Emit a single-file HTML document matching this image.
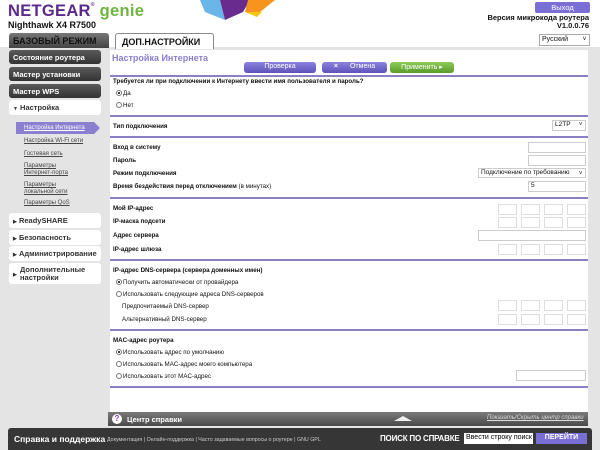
<!DOCTYPE html>
<html><head><meta charset="utf-8"><style>
*{margin:0;padding:0;box-sizing:border-box}
body{width:600px;height:450px;position:relative;overflow:hidden;background:#fff;font-family:"Liberation Sans",sans-serif;color:#111}
.a{position:absolute;white-space:nowrap}
.sb{position:absolute;left:9px;width:92px;height:14px;border-radius:3px;background:linear-gradient(#5a5a5a,#333);color:#fff;font-size:7.5px;font-weight:bold;padding:3px 0 0 4px}
.sw{position:absolute;left:9px;width:92px;height:15px;border-radius:3px;background:#fff;color:#333;font-size:7.5px;font-weight:bold;padding:3px 0 0 4px}
.sub{position:absolute;left:24px;font-size:6px;color:#444;text-decoration:underline;line-height:7px}
.t{position:absolute;left:113px;font-size:6.2px;font-weight:bold;white-space:nowrap}
.tn{position:absolute;font-size:6.2px;white-space:nowrap}
.ln{position:absolute;left:110px;width:478px;height:2px;background:#8b80c6}
.in{position:absolute;height:11px;border:1px solid #ccc;background:#fff;font-size:6.5px;padding-left:2px}
.ib{position:absolute;width:19px;height:11px;border:1px solid #ddd;background:#fff}
.r{display:inline-block;width:6px;height:6px;border:1px solid #777;border-radius:50%;vertical-align:-1px;margin-right:1px;position:relative}
.r.on:after{content:"";position:absolute;left:1px;top:1px;width:2px;height:2px;border-radius:50%;background:#000}
.btn{position:absolute;top:62px;height:11px;border-radius:3px;color:#fff;font-size:7px;text-align:center;padding-top:1px}
</style></head><body>
<!-- header -->
<div class="a" style="left:8px;top:2px;font-size:16.5px;font-weight:bold;color:#5b2a8a;letter-spacing:0.3px">NETGEAR<span style="font-size:5px;vertical-align:top">®</span> <span style="color:#6fb43f">genie</span></div>
<svg class="a" style="left:200px;top:0" width="80" height="22"><polygon points="0,0 20,0 25,20 5,12" fill="#69b7e8"/><polygon points="20,0 50,0 43,12 25,20" fill="#6a2b8f"/><polygon points="48,0 75,0 60,12 45,12" fill="#f7941d"/><polygon points="45,12 62,12 57,17" fill="#f9c513"/></svg>
<div class="a" style="left:8px;top:20px;font-size:9px;font-weight:bold">Nighthawk X4 R7500</div>
<div class="a" style="left:535px;top:2px;width:55px;height:11px;background:#7b6fd6;color:#fff;font-size:7.5px;text-align:center;border-radius:2px;padding-top:1px">Выход</div>
<div class="a" style="right:11px;top:14px;font-size:7.5px;font-weight:bold;text-align:right;line-height:8px">Версия микрокода роутера<br>V1.0.0.76</div>
<!-- tab strip -->
<div class="a" style="left:0;top:47px;width:600px;height:403px;background:#e4e4e4"></div>
<div class="a" style="left:9px;top:33px;width:100px;height:15px;background:linear-gradient(#777,#444);border-radius:3px 3px 0 0;color:#111;font-size:9px;font-weight:bold;padding:3px 0 0 4px">БАЗОВЫЙ РЕЖИМ</div>
<div class="a" style="left:115px;top:33px;width:99px;height:16px;background:#fff;border:1px solid #888;border-bottom:none;border-radius:3px 3px 0 0;font-size:9px;font-weight:bold;padding:3px 0 0 6px">ДОП.НАСТРОЙКИ</div>
<div class="a" style="left:539px;top:34px;width:51px;height:12px;background:#fff;border:1px solid #aaa;font-size:7px;padding:1px 0 0 2px">Русский<span style="position:absolute;right:3px;font-size:6px">v</span></div>
<!-- sidebar -->
<div class="sb" style="top:50px">Состояние роутера</div>
<div class="sb" style="top:67px">Мастер установки</div>
<div class="sb" style="top:84px">Мастер WPS</div>
<div class="sw" style="top:100px"><span style="font-size:5px">▼</span> Настройка</div>
<div class="a" style="left:16px;top:122px;width:84px;height:12px;background:#8b80d0;clip-path:polygon(0 0,93% 0,100% 50%,93% 100%,0 100%)"></div>
<div class="sub" style="top:125px;color:#fff">Настройка Интернета</div>
<div class="sub" style="top:138px">Настройка Wi-Fi сети</div>
<div class="sub" style="top:151px">Гостевая сеть</div>
<div class="sub" style="top:163px">Параметры<br>Интернет-порта</div>
<div class="sub" style="top:182px">Параметры<br>локальной сети</div>
<div class="sub" style="top:200px">Параметры QoS</div>
<div class="sw" style="top:213px"><span style="font-size:5px">▶</span> ReadySHARE</div>
<div class="sw" style="top:230px"><span style="font-size:5px">▶</span> Безопасность</div>
<div class="sw" style="top:246px"><span style="font-size:5px">▶</span> Администрирование</div>
<div class="sw" style="top:263px;height:21px;line-height:8px;padding-top:3px;padding-left:11px"><span style="font-size:5px;position:absolute;left:4px;top:8px">▶</span>Дополнительные<br>настройки</div>
<!-- content -->
<div class="a" style="left:110px;top:50px;width:478px;height:362px;background:#fff"></div>
<div class="a" style="left:112px;top:53px;font-size:9px;font-weight:bold;color:#8a7fcc">Настройка Интернета</div>
<div class="btn" style="left:244px;width:72px;background:linear-gradient(#8d83dd,#5d52b8)">Проверка</div>
<div class="btn" style="left:322px;width:65px;background:linear-gradient(#8d83dd,#5d52b8)"><b style="margin-right:12px">×</b>Отмена</div>
<div class="btn" style="left:390px;width:64px;background:linear-gradient(#8fcc5a,#5a9a2a)">Применить ▸</div>
<div class="ln" style="top:75px"></div>
<div class="t" style="top:78px">Требуется ли при подключении к Интернету ввести имя пользователя и пароль?</div>
<div class="tn" style="left:116px;top:90px"><span class="r on"></span>Да</div>
<div class="tn" style="left:116px;top:102px"><span class="r"></span>Нет</div>
<div class="ln" style="top:115px"></div>
<div class="t" style="top:123px">Тип подключения</div>
<div class="in" style="left:552px;top:120px;width:34px">L2TP<span style="position:absolute;right:3px;font-size:5.5px">v</span></div>
<div class="ln" style="top:136px"></div>
<div class="t" style="top:144px">Вход в систему</div>
<div class="in" style="left:528px;top:142px;width:58px"></div>
<div class="t" style="top:157px">Пароль</div>
<div class="in" style="left:528px;top:155px;width:58px"></div>
<div class="t" style="top:170px">Режим подключения</div>
<div class="in" style="left:478px;top:168px;width:108px;height:10px;font-size:6.5px;line-height:8px">Подключение по требованию<span style="position:absolute;right:3px;font-size:5.5px">v</span></div>
<div class="t" style="top:183px">Время бездействия перед отключением <span style="font-weight:normal">(в минутах)</span></div>
<div class="in" style="left:528px;top:181px;width:58px">5</div>
<div class="ln" style="top:197px"></div>
<div class="t" style="top:205px">Мой IP-адрес</div>
<div class="t" style="top:218px">IP-маска подсети</div>
<div class="t" style="top:232px">Адрес сервера</div>
<div class="in" style="left:478px;top:230px;width:108px"></div>
<div class="t" style="top:246px">IP-адрес шлюза</div>
<div class="ib" style="left:498px;top:204px"></div><div class="ib" style="left:521px;top:204px"></div><div class="ib" style="left:544px;top:204px"></div><div class="ib" style="left:567px;top:204px"></div>
<div class="ib" style="left:498px;top:217px"></div><div class="ib" style="left:521px;top:217px"></div><div class="ib" style="left:544px;top:217px"></div><div class="ib" style="left:567px;top:217px"></div>
<div class="ib" style="left:498px;top:244px"></div><div class="ib" style="left:521px;top:244px"></div><div class="ib" style="left:544px;top:244px"></div><div class="ib" style="left:567px;top:244px"></div>
<div class="ln" style="top:259px"></div>
<div class="t" style="top:267px">IP-адрес DNS-сервера (сервера доменных имен)</div>
<div class="tn" style="left:116px;top:279px"><span class="r on"></span>Получить автоматически от провайдера</div>
<div class="tn" style="left:116px;top:291px"><span class="r"></span>Использовать следующие адреса DNS-серверов</div>
<div class="tn" style="left:122px;top:303px">Предпочитаемый DNS-сервер</div>
<div class="tn" style="left:122px;top:316px">Альтернативный DNS-сервер</div>
<div class="ib" style="left:498px;top:300px"></div><div class="ib" style="left:521px;top:300px"></div><div class="ib" style="left:544px;top:300px"></div><div class="ib" style="left:567px;top:300px"></div>
<div class="ib" style="left:498px;top:314px"></div><div class="ib" style="left:521px;top:314px"></div><div class="ib" style="left:544px;top:314px"></div><div class="ib" style="left:567px;top:314px"></div>
<div class="ln" style="top:329px"></div>
<div class="t" style="top:337px">MAC-адрес роутера</div>
<div class="tn" style="left:116px;top:349px"><span class="r on"></span>Использовать адрес по умолчанию</div>
<div class="tn" style="left:116px;top:361px"><span class="r"></span>Использовать MAC-адрес моего компьютера</div>
<div class="tn" style="left:116px;top:373px"><span class="r"></span>Использовать этот MAC-адрес</div>
<div class="in" style="left:516px;top:370px;width:70px"></div>
<div class="ln" style="top:386px"></div>
<!-- help bar -->
<div class="a" style="left:108px;top:412px;width:480px;height:14px;background:linear-gradient(#7a7a7a,#4a4a4a)"></div>
<div class="a" style="left:112px;top:414px;width:10px;height:10px;border-radius:50%;background:#fff;color:#8a3fb0;font-size:8px;font-weight:bold;text-align:center;line-height:10px">?</div>
<div class="a" style="left:127px;top:415px;font-size:7.5px;font-weight:bold;color:#fff">Центр справки</div>
<div class="a" style="left:394px;top:416px;width:0;height:0;border-left:9px solid transparent;border-right:9px solid transparent;border-bottom:5px solid #eee"></div>
<div class="a" style="left:487px;top:415px;font-size:6px;color:#ddd;text-decoration:underline;font-style:italic">Показать/Скрыть центр справки</div>
<!-- footer -->
<div class="a" style="left:8px;top:428px;width:584px;height:22px;background:#363636;border-radius:3px 3px 0 0"></div>
<div class="a" style="left:14px;top:434px;font-size:8.5px;font-weight:bold;color:#fff">Справка и поддержка</div>
<div class="a" style="left:107px;top:437px;font-size:5.3px;color:#ccc">Документация | Онлайн-поддержка | Часто задаваемые вопросы о роутере | GNU GPL</div>
<div class="a" style="left:380px;top:434px;font-size:8px;font-weight:bold;color:#fff;letter-spacing:-0.2px">ПОИСК ПО СПРАВКЕ</div>
<div class="a" style="left:464px;top:433px;width:69px;height:11px;background:#fff;font-size:7px;padding:1px 0 0 2px;color:#000">Ввести строку поиск</div>
<div class="a" style="left:536px;top:433px;width:51px;height:11px;background:#7b6fd6;color:#fff;font-size:7px;font-weight:bold;text-align:center;padding-top:1px">ПЕРЕЙТИ</div>
</body></html>
